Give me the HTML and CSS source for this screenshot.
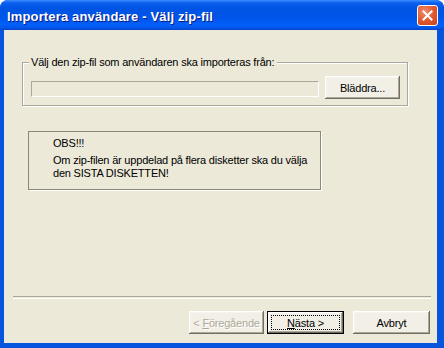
FILE: index.html
```html
<!DOCTYPE html>
<html lang="sv">
<head>
    <meta charset="UTF-8">
    <meta name="viewport" content="width=device-width, initial-scale=1.0">
    <title>Importera användare - Välj zip-fil</title>
    <link rel="stylesheet" href="styles.css">
</head>
<body>
    <div class="window">
        <div class="titlebar">
            <span class="title">Importera användare - Välj zip-fil</span>
            <button class="close" title="Stäng">
                <svg width="11" height="11" viewBox="0 0 11 11">
                    <path d="M1.5 1.5 L9.5 9.5 M9.5 1.5 L1.5 9.5" stroke="#fff" stroke-width="2" stroke-linecap="square" fill="none"/>
                </svg>
            </button>
        </div>
        <div class="client">
            <div class="page">
                <fieldset class="group">
                    <legend>Välj den zip-fil som användaren ska importeras från:</legend>
                    <div class="file-row">
                        <input class="path" type="text" disabled>
                        <button class="btn">Bläddra...</button>
                    </div>
                </fieldset>
                <div class="notice">
                    <p class="notice-head">OBS!!!</p>
                    <p>Om zip-filen är uppdelad på flera disketter ska du välja<br>den SISTA DISKETTEN!</p>
                </div>
            </div>
            <div class="separator"></div>
            <div class="actions">
                <button class="btn back" disabled>&lt; <u>F</u>öregående</button>
                <button class="btn default"><span class="focus"><u>N</u>ästa &gt;</span></button>
                <button class="btn cancel">Avbryt</button>
            </div>
        </div>
    </div>
</body>
</html>
```

FILE: styles.css
```css
body {
    margin: 0;
    background: #fff;
    font-family: 'Liberation Sans', Arial, sans-serif;
    font-size: 11px;
    letter-spacing: -0.2px;
    color: #000;
}

.window {
    width: 444px;
    height: 348px;
    display: flex;
    flex-direction: column;
    border-radius: 8px 8px 0 0;
    background: #0855dd;
    overflow: hidden;
}

.titlebar {
    height: 30px;
    flex: none;
    display: flex;
    align-items: center;
    justify-content: space-between;
    padding: 0 6px 0 7px;
    background: linear-gradient(to bottom, #3a8cff 0, #0a5fee 3px, #0054e3 8px, #0055eb 18px, #0060f8 25px, #0055e8 28px, #0840c8 30px);
}

.title {
    padding-top: 3px;
    font-size: 13px;
    font-weight: bold;
    letter-spacing: 0.15px;
    color: #fff;
    text-shadow: 1px 1px 0 #0a1883;
}

.close {
    width: 21px;
    height: 21px;
    padding: 0;
    margin-top: 1px;
    display: flex;
    align-items: center;
    justify-content: center;
    border: 1px solid #fff;
    border-radius: 3px;
    background: radial-gradient(circle at 35% 30%, #ef8c6c, #e0552e 55%, #c8421c);
}

.client {
    flex: 1;
    display: flex;
    flex-direction: column;
    margin: 0 7px 5px 4px;
    background: #ece9d8;
}

.page {
    flex: 1;
    padding: 26px 0 0 18px;
}

.group {
    width: 385px;
    box-sizing: border-box;
    margin: 0;
    padding: 7px 7px 6px 6px;
    border: 1px solid #aca899;
    box-shadow: 1px 1px 0 #fff, inset 1px 1px 0 #fff;
}

.group legend {
    padding: 0 3px 0 2px;
    line-height: 13px;
    background: #ece9d8;
}

.file-row {
    display: flex;
    align-items: center;
    margin-left: 2px;
}

.path {
    width: 288px;
    height: 16px;
    box-sizing: border-box;
    margin: 2px 6px 0 0;
    padding: 0;
    border: 1px solid #aca899;
    border-right-color: #fff;
    border-bottom-color: #fff;
    background: #ece9d8;
}

.btn {
    width: 75px;
    height: 23px;
    padding: 0;
    font-family: inherit;
    font-size: 11px;
    letter-spacing: -0.2px;
    color: #000;
    background: #f1efe6;
    border: none;
    box-shadow: inset -1px -1px 0 #716f64, inset 1px 1px 0 #fff, inset -2px -2px 0 #aca899, inset 2px 2px 0 #f5f4ee;
}

.btn:disabled {
    color: #aca899;
    text-shadow: 1px 1px 0 #fff;
}

.notice {
    width: 293px;
    height: 59px;
    box-sizing: border-box;
    margin: 25px 0 0 6px;
    padding: 5px 0 0 24px;
    border: 1px solid #8a8776;
    box-shadow: 1px 1px 0 #fff;
    line-height: 13px;
}

.notice p {
    margin: 0;
}

.notice .notice-head {
    margin-bottom: 4px;
}

.separator {
    height: 1px;
    margin: 0 6px 0 9px;
    border-top: 1px solid #aca899;
    border-bottom: 1px solid #fff;
}

.actions {
    display: flex;
    justify-content: flex-end;
    padding: 12px 7px 9px 0;
}

.back {
    margin-right: 3px;
}

.default {
    width: 77px;
    padding: 3px;
    border: 1px solid #000;
    display: flex;
}

.focus {
    flex: 1;
    display: flex;
    align-items: center;
    justify-content: center;
    border: 1px dotted #000;
}

.cancel {
    width: 77px;
    margin-left: 9px;
}
```
